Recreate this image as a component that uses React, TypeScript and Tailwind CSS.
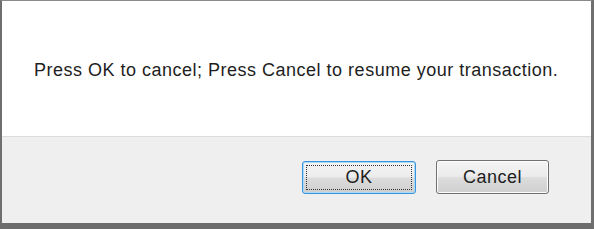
import React from "react";

export default function App() {
  return (
    <div className="w-[594px] h-[229px] bg-white">
      <div className="w-[594px] h-[229px] flex flex-col border-t border-l-2 border-r-[3px] border-b-[6px] border-t-[#8a8a8a] border-l-[#6f6f6f] border-r-[#6f6f6f] border-b-[#6c6c6c] box-border font-['Liberation_Sans',Arial,sans-serif]">
        <div className="h-[135px] flex items-center pl-[32px] bg-white">
          <p className="text-[18px] leading-[20px] tracking-[0.5px] text-[#1e1e1e] pt-[2px]">
            Press OK to cancel; Press Cancel to resume your transaction.
          </p>
        </div>
        <div className="flex-1 flex items-center justify-end gap-[20px] pr-[42px] pb-[6px] bg-[#efefef] border-t border-t-[#dcdcdc]">
          <button className="relative w-[114px] h-[33px] rounded-[3px] border border-[#3a93dc] shadow-[inset_0_0_0_1px_#a8dbf6] bg-[linear-gradient(to_bottom,#f4f4f4_0%,#ececec_48%,#dcdcdc_52%,#cfcfcf_100%)] text-[18px] tracking-[0.5px] text-[#1e1e1e]">
            <span className="absolute inset-[3px] border border-dotted border-[#333]" />
            <span className="relative">OK</span>
          </button>
          <button className="w-[113px] h-[34px] rounded-[3px] border border-[#707070] shadow-[inset_0_0_0_1px_#fcfcfc] bg-[linear-gradient(to_bottom,#f4f4f4_0%,#ebebeb_48%,#dddddd_52%,#cfcfcf_100%)] text-[18px] tracking-[0.5px] text-[#1e1e1e]">
            Cancel
          </button>
        </div>
      </div>
    </div>
  );
}
